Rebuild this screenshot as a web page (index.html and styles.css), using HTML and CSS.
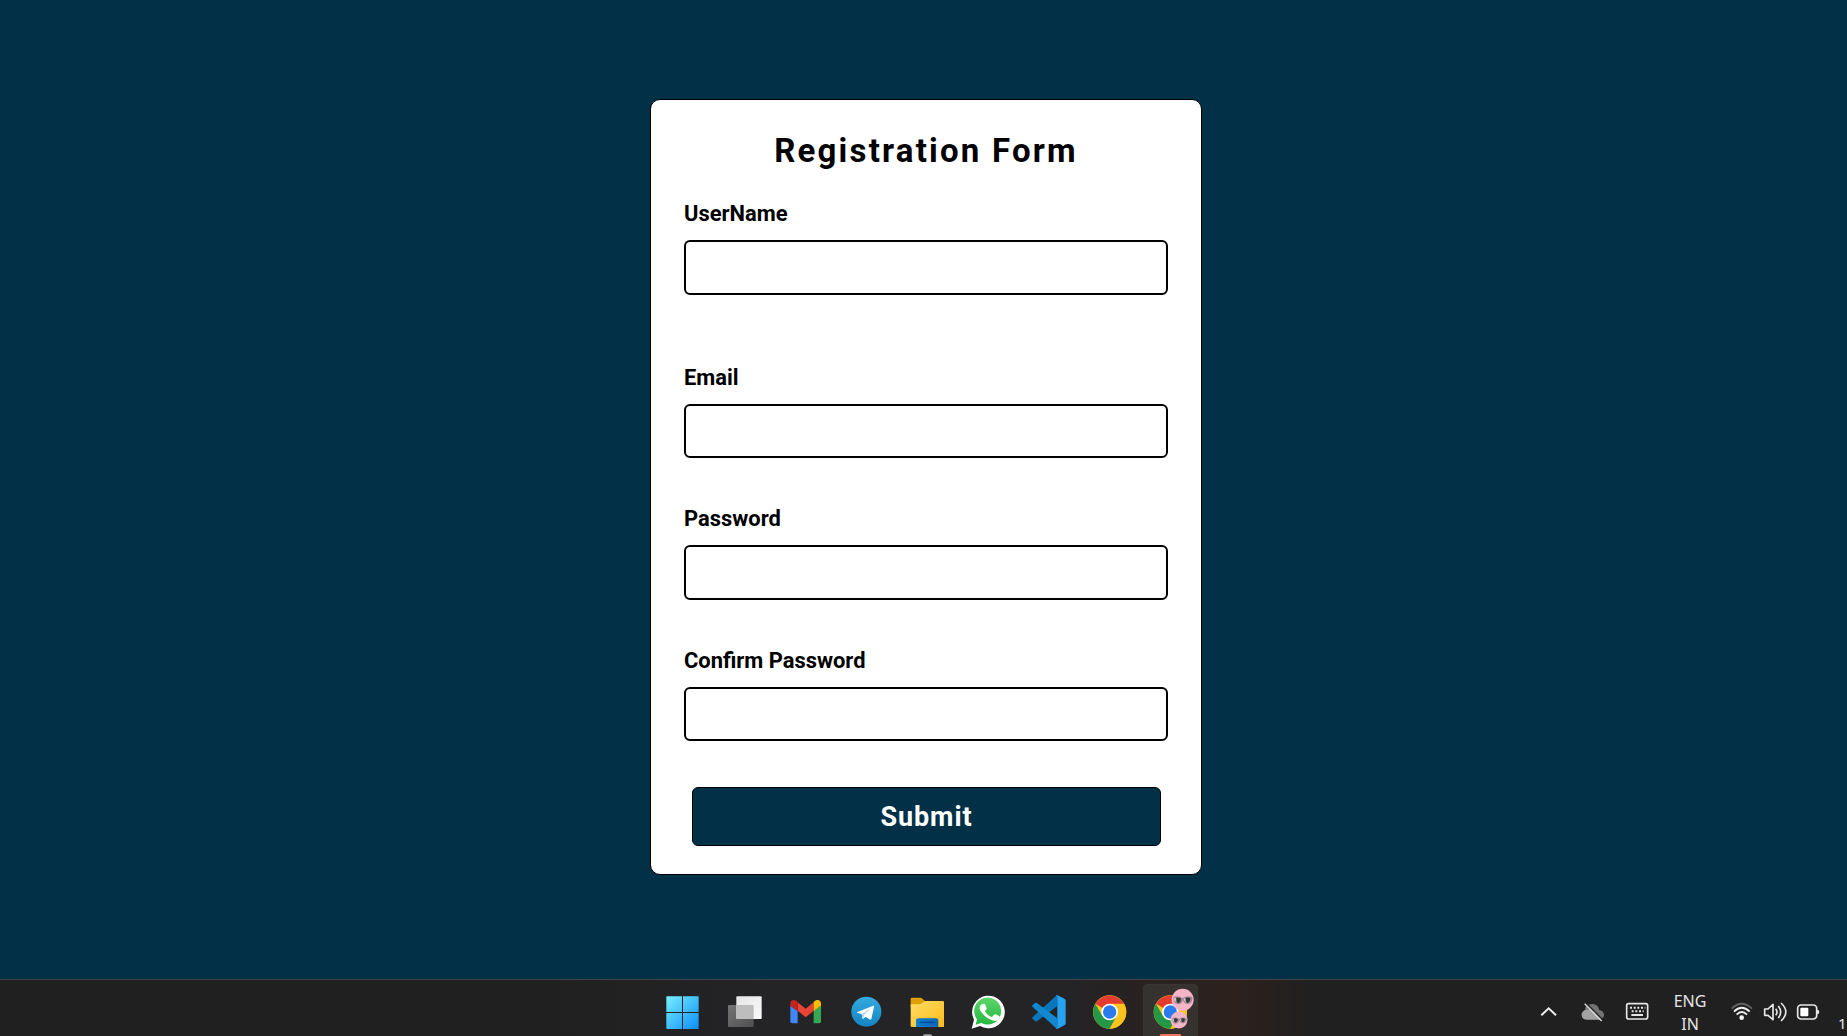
FILE: index.html
```html
<!DOCTYPE html>
<html lang="en">
<head>
<meta charset="utf-8">
<title>Registration Form</title>
<link rel="stylesheet" href="styles.css">
</head>
<body>
<main class="page">
  <form class="card">
    <h1 class="title">Registration Form</h1>
    <div class="field field-first"><label class="label" for="user">UserName</label><input class="input" id="user" type="text"></div>
    <div class="field"><label class="label" for="email">Email</label><input class="input" id="email" type="text"></div>
    <div class="field"><label class="label" for="pass">Password</label><input class="input" id="pass" type="password"></div>
    <div class="field"><label class="label" for="confirm">Confirm Password</label><input class="input" id="confirm" type="password"></div>
    <button class="submit" type="button">Submit</button>
  </form>
</main>
<footer class="taskbar">
  <nav class="apps">
    <svg class="app" viewBox="36 30 183 168">
      <defs><linearGradient id="win" gradientUnits="userSpaceOnUse" x1="79" y1="79" x2="176" y2="177"><stop offset="0" stop-color="#78efff"/><stop offset="1" stop-color="#0b8df8"/></linearGradient></defs>
      <path fill="url(#win)" d="M81 79H126V126H79V81Q79 79 81 79ZM129 79H174Q176 79 176 81V126H129ZM79 129H126V177H81Q79 177 79 175ZM129 129H176V175Q176 177 174 177H129Z"/>
    </svg>
    <svg class="app" viewBox="219 30 183 168">
      <defs><linearGradient id="tv" x1="0" y1="0" x2="1" y2="1"><stop offset="0" stop-color="#e6e6e6"/><stop offset="1" stop-color="#fafafa"/></linearGradient>
      <linearGradient id="tv2" x1="0" y1="0" x2="1" y2="1"><stop offset="0" stop-color="#747474"/><stop offset="1" stop-color="#505050"/></linearGradient></defs>
      <rect x="264" y="105" width="77" height="66" rx="3" fill="url(#tv2)"/>
      <rect x="289" y="79" width="76" height="68" rx="3" fill="url(#tv)"/>
      <path fill="#bdbdbd" d="M289 105H338Q341 105 341 108V147H292Q289 147 289 144Z"/>
    </svg>
    <svg class="app" viewBox="402 30 183 168">
      <path fill="#4285f4" d="M451 107L473 122V160H457Q451 160 451 154Z"/>
      <path fill="#34a853" d="M521 122L543 107V154Q543 160 537 160H521Z"/>
      <path fill="#ea4335" d="M473 97L497 116L521 97V122L497 142L473 122Z"/>
      <path fill="#c5221f" d="M451 101C451 89 464 86 473 96V123L451 107Z"/>
      <path fill="#fbbc04" d="M543 101C543 89 530 86 521 96V123L543 107Z"/>
    </svg>
    <svg class="app" viewBox="15 30 183 168">
      <defs><linearGradient id="tg" x1="0" y1="0" x2="0" y2="1"><stop offset="0" stop-color="#34aadf"/><stop offset="1" stop-color="#1484c3"/></linearGradient></defs>
      <circle cx="109" cy="125" r="45" fill="url(#tg)"/>
      <path fill="#fff" d="M82 126L130 107Q133 106 132 110L124 147Q122 151 118 148L107 140L100 146Q97 147 97 142L95 132L83 129Q79 127 82 126Z"/>
      <path fill="#b9d7e9" d="M95 132L123 114L103 134L100 146Q97 146 97 142Z"/>
    </svg>
    <svg class="app" viewBox="198 30 183 168">
      <defs><linearGradient id="fd" x1="0" y1="0" x2="1" y2="1"><stop offset="0" stop-color="#ffdc65"/><stop offset="1" stop-color="#fcba19"/></linearGradient>
      <linearGradient id="fb" x1="0" y1="0" x2="1" y2="0"><stop offset="0" stop-color="#087fd2"/><stop offset="1" stop-color="#0b65b6"/></linearGradient></defs>
      <path fill="#dfa005" d="M246 83H271Q274 83 277 86L285 93V110H242V87Q242 83 246 83Z"/>
      <path fill="url(#fd)" d="M242 103H269Q273 103 276 100L281 95Q283 93 287 93H338Q342 93 342 97V171H246Q242 171 242 167Z"/>
      <path fill="url(#fb)" d="M258 171V152Q258 145 266 145H317Q325 145 325 152V171Z"/>
      <rect x="269" y="155" width="44" height="4" rx="2" fill="#074a88"/>
      <rect x="279" y="193" width="27" height="9" rx="4.500" fill="#a2a2a2"/>
    </svg>
    <svg class="app" viewBox="381 30 183 168">
      <defs><linearGradient id="wa" x1="0" y1="0" x2="0" y2="1"><stop offset="0" stop-color="#5bd669"/><stop offset="1" stop-color="#28b641"/></linearGradient></defs>
      <path fill="#fff" d="M425 176L432 149A49 49 0 1 1 450 168Z"/>
      <path fill="url(#wa)" d="M437 164L441 148A40.500 40.500 0 1 1 454 159Z"/>
      <path fill="#fff" d="M457 101H462Q465 101 466 104L470 114Q471 117 467 121Q464 123 466 126Q473 137 484 141Q486 142 488 139L492 134Q494 132 497 133L507 138Q510 139 509 142Q507 151 496 153C480 153 455 134 449 117Q447 107 457 101Z"/>
    </svg>
    <svg class="app" viewBox="-36 30 183 168">
      <path fill="#0876ba" d="M82 76V108L21 154Q18 156 15 153L8 147Q5 144 8 141L77 79Q79 76 82 76Z"/>
      <path fill="#1288d0" d="M82 176V145L21 99Q18 97 15 99L8 105Q5 108 8 111L77 173Q79 176 82 176Z"/>
      <path fill="#27a3f2" d="M83 76L103 86Q107 88 107 92V160Q107 164 103 166L83 176Q79 177 77 173Q82 176 82 169V83Q82 76 77 79Q80 75 83 76Z"/>
    </svg>
    <svg class="app" viewBox="147 30 183 168">
      <g id="chrome">
        <circle cx="239" cy="126" r="50" fill="#fcc31e"/>
        <path fill="#e33b2e" d="M239 126L196 101A50 50 0 0 1 282 101Z"/>
        <path fill="#259847" d="M196 101A50 50 0 0 0 239 176L260 138L217 138Z"/>
        <path fill="#fcc31e" d="M239 101H282A50 50 0 0 1 239 176L261 139Z"/>
        <circle cx="239" cy="126" r="25" fill="#fff"/>
        <circle cx="239" cy="126" r="20" fill="#2a7cec"/>
      </g>
    </svg>
    <svg class="app" viewBox="330 30 183 168">
      <path fill="#353230" stroke="#403d3a" stroke-width="2" d="M340 203V56Q340 43 353 43H490Q503 43 503 56V203Z"/>
      <use href="#chrome" x="182" y="0"/>
      <g id="face">
        <circle cx="458" cy="89" r="33" fill="#f5b5c8"/>
        <path fill="#a18992" d="M430 81Q444 76 458 84Q472 76 487 81V90Q483 103 471 102Q461 101 459 91Q456 101 447 103Q433 103 431 91Z"/>
        <path fill="#33393b" d="M439 83Q448 81 453 86Q453 96 446 99Q438 98 439 83ZM467 83Q475 81 481 84Q481 96 473 99Q465 95 467 83Z"/>
        <path fill="#d6c9cc" d="M432 83L438 84L437 96Q431 92 432 83ZM461 86L466 85L466 95Q461 92 461 86Z"/>
      </g>
      <use href="#face" transform="translate(447 150) scale(.77) translate(-458 -89)"/>
      <rect x="389" y="192" width="65" height="12" rx="5" fill="#ee765e"/>
    </svg>
  </nav>
  <div class="tray">
    <svg class="chevron" viewBox="21 30 129 168"><path d="M64 136L86 115L108 136" fill="none" stroke="#eee" stroke-width="6"/></svg>
    <svg class="cloud" viewBox="150 30 132 168">
      <path fill="#737373" d="M198 120Q191 116 199 109Q207 101 219 102Q234 103 238 120Q253 124 252 136Q250 147 238 148L200 147Z"/>
      <path fill="#a3a3a3" d="M186 140Q181 127 196 119Q211 116 225 127Q232 137 241 149H200Q188 148 186 140Z"/>
      <path stroke="#202020" stroke-width="4" d="M198 99L249 150"/>
      <path stroke="#ddd" stroke-width="4" d="M194 101L245 153"/>
    </svg>
    <svg class="keyboard" viewBox="282 30 138 168">
      <rect x="320" y="101" width="63" height="46" rx="6" fill="none" stroke="#e6e6e6" stroke-width="5"/>
      <path stroke="#e6e6e6" stroke-width="6" stroke-dasharray="6 5" d="M330 113H376M335 124H371"/><path stroke="#e6e6e6" stroke-width="6" d="M334 135H369"/>
    </svg>
    <div class="lang"><span>ENG</span><span>IN</span></div>
    <svg class="wifi" viewBox="120 30 117 168">
      <g fill="none" stroke-width="5.500"><path stroke="#626262" d="M155 116Q185 87 216 116"/><path stroke="#eee" d="M162 125Q185 102 209 125M170 134Q185 118 201 134"/></g>
      <circle cx="185" cy="143" r="7" fill="#f2f2f2"/>
    </svg>
    <svg class="speaker" viewBox="237 30 96 168">
      <g fill="none" stroke="#e6e6e6" stroke-width="5"><path stroke-linejoin="round" d="M254 117H264L279 103V149L264 136H254Z"/><path d="M287 116Q295 126 287 136M295 108Q309 126 295 144M303 99Q332 126 303 153"/></g>
    </svg>
    <svg class="battery" viewBox="333 30 108 168">
      <rect x="353" y="105" width="57" height="42" rx="10" fill="none" stroke="#e6e6e6" stroke-width="5"/>
      <rect x="361" y="113" width="24" height="26" rx="3" fill="#fff"/><path fill="#e6e6e6" d="M411 119Q418 119 418 126Q418 133 411 133Z"/>
    </svg>
    <div class="clock">1</div>
  </div>
</footer>
</body>
</html>
```
FILE: styles.css
```css
* { box-sizing: border-box; }
body {
  margin: 0;
  height: 1036px;
  overflow: hidden;
  display: flex;
  flex-direction: column;
  background: #023047;
  font-family: Roboto, sans-serif;
}
.page { height: 979px; flex: none; padding: 99px 0 0 650px; }
.card {
  width: 552px;
  height: 776px;
  padding: 29px 33px 0;
  border: 1px solid #000;
  border-radius: 10px;
  background: #fff;
  display: flex;
  flex-direction: column;
}
.title {
  margin: 0;
  height: 44px;
  line-height: 44px;
  font-size: 33px;
  font-weight: 700;
  letter-spacing: 2.200px;
  text-align: center;
  white-space: nowrap;
}
.field { height: 141.500px; display: flex; flex-direction: column; padding-top: 28px; }
.field-first { height: 163.700px; }
.label { height: 39.300px; line-height: 26px; font-size: 21.900px; font-weight: 700; }
.input {
  width: 484px;
  height: 54.500px;
  flex: none;
  padding: 0 12px;
  border: 2px solid #000;
  border-radius: 6px;
  background: #fff;
}
.submit {
  width: 469px;
  height: 59px;
  margin: 26px 8px 0;
  flex: none;
  border: 1px solid #000;
  border-radius: 6px;
  background: #023047;
  color: #fff;
  font: 700 27px Roboto, sans-serif;
  letter-spacing: 0.900px;
}
.taskbar {
  height: 57px;
  flex: none;
  display: flex;
  justify-content: space-between;
  padding-left: 652px;
  border-top: 1px solid #434343;
  background: linear-gradient(90deg, #202020 30%, #242427 42%, #242325 58%, #2c211d 66%, #2c211d 67%, #202020 71%);
}
.apps { display: flex; }
.app { width: 61px; height: 56px; }
.tray { display: flex; width: 320px; flex: none; color: #e6e6e6; font-family: "Noto Sans", sans-serif; }
.tray svg { height: 56px; flex: none; }
.chevron { width: 43px; }
.cloud { width: 44px; }
.keyboard { width: 46px; }
.lang {
  width: 60px;
  padding-top: 10px;
  display: flex;
  flex-direction: column;
  align-items: center;
  font-size: 16px;
  line-height: 22.500px;
}
.wifi { width: 39px; }
.speaker { width: 32px; }
.battery { width: 36px; }
.clock { width: 20px; flex: none; padding: 33px 0 0 11px; font-size: 15px; line-height: 20px; }
```
